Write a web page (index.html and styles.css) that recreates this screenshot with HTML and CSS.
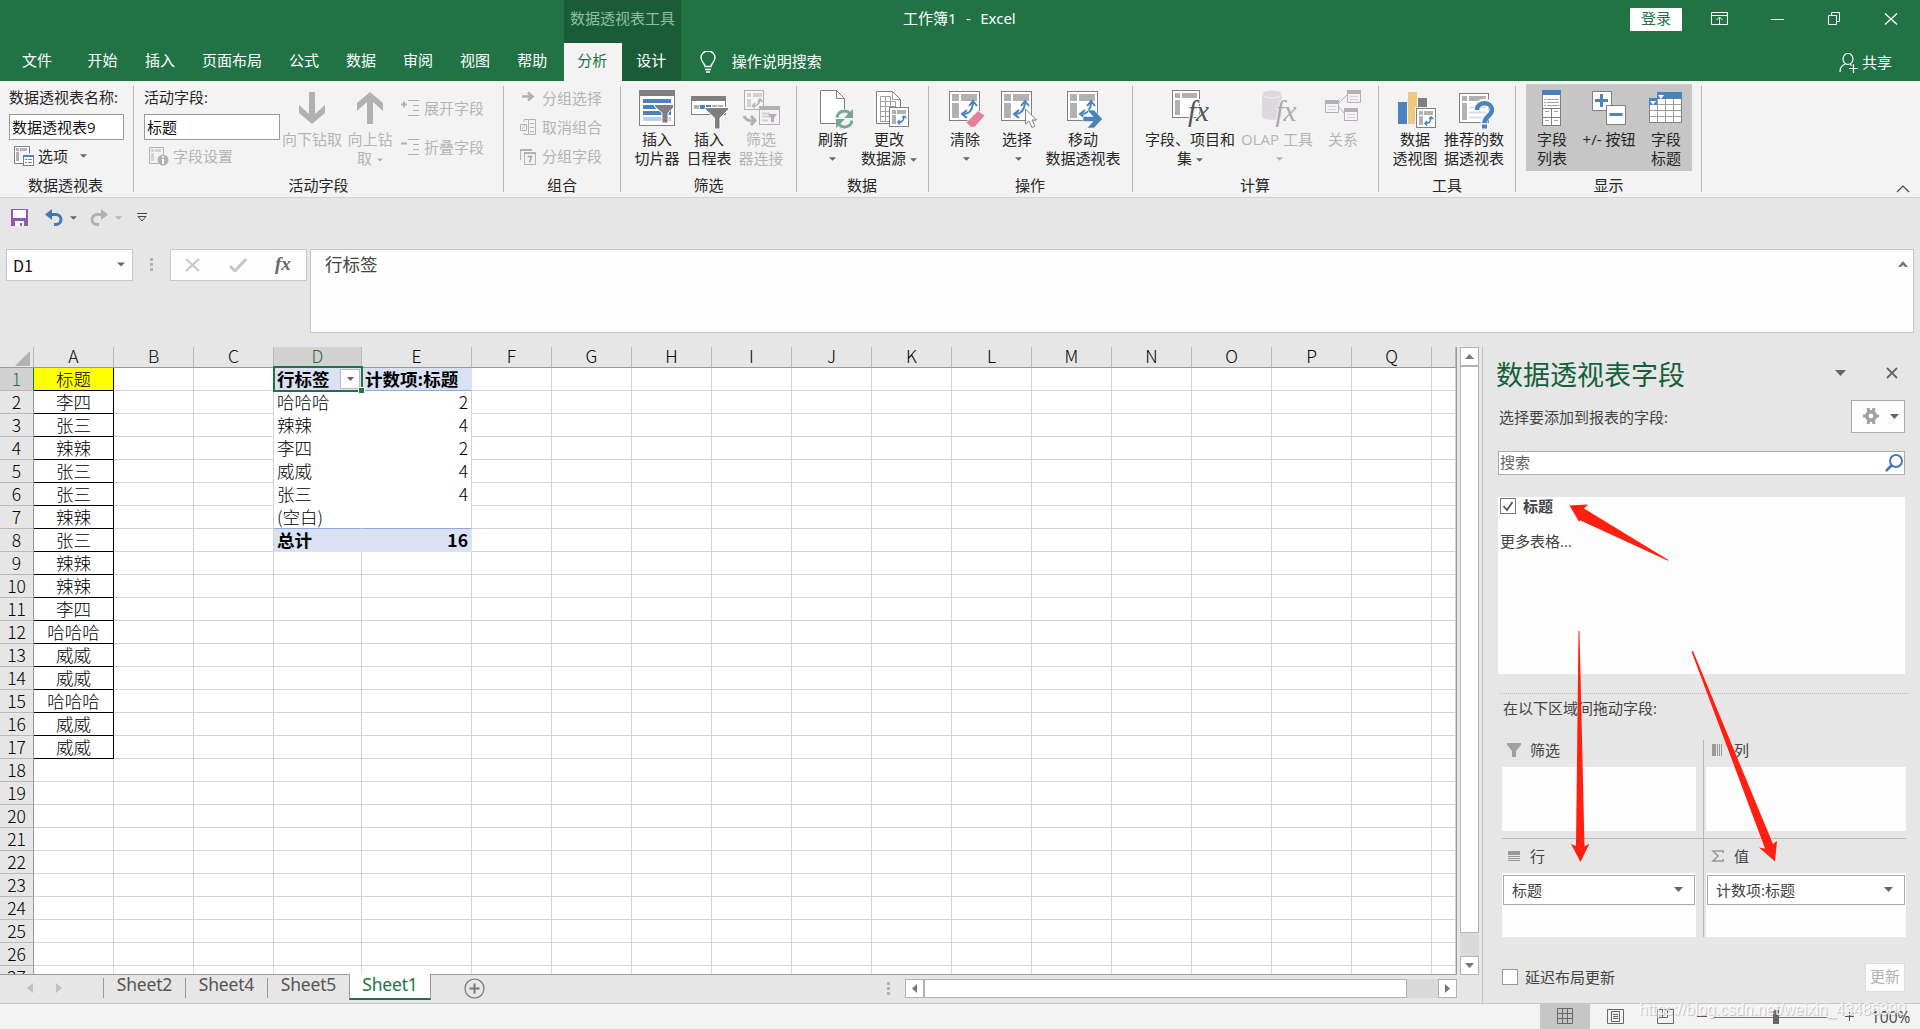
FILE: index.html
```html
<!DOCTYPE html>
<html lang="zh-CN">
<head>
<meta charset="utf-8">
<title>工作簿1 - Excel</title>
<link rel="stylesheet" href="styles.css">
</head>
<body>
<svg class="defs" width="0" height="0">
  <defs>
    <symbol id="pivot" viewBox="0 0 40 40">
      <rect x="4.5" y="2.5" width="30" height="29" fill="#fff" stroke="#7f7f7f"/>
      <path d="M7 5h7v7H7zM16 5h16v7H16zM7 14h7v15H7z" fill="#b1b1b1"/>
      <path d="M18 25q9 0 10-11M22 21l-5 4 5 4M24 17l4-5 4 5" fill="none" stroke="#4a82bd" stroke-width="2"/>
    </symbol>
    <symbol id="pivot-s" viewBox="0 0 20 20">
      <rect x=".5" y=".5" width="19" height="19" fill="#fff" stroke="#7f7f7f"/>
      <path d="M3 3h4v4H3zM8 3h9v4H8zM3 8h4v9H3z" fill="#b1b1b1"/>
      <path d="M9 15.500q6 0 6-6M11 13l-2 2.500 2 2M13 11l2-2 2.500 2" fill="none" stroke="#4a82bd" stroke-width="1.500"/>
    </symbol>
    <symbol id="down" viewBox="0 0 10 5"><path d="M0 0h10L5 5z" fill="currentColor"/></symbol>
  </defs>
</svg>

<header class="top">
  <div class="titlebar">
    <div class="context-title">数据透视表工具</div>
    <div class="doc-title">工作簿1&nbsp; -&nbsp; Excel</div>
    <div class="signin">登录</div>
    <svg class="win-icons" width="192" height="20" viewBox="0 0 192 20" fill="none" stroke="#fff">
      <path d="M4.500 3.500h16v12h-16zM4.500 6.500h16M12.500 15V8.500M9.500 11l3-3 3 3"/>
      <path d="M64 10.500h13M121.500 6.500h8v9h-8zM124.500 6V3.500h8v9H130"/>
      <path d="M178 4.500l12 11M190 4.500l-12 11" stroke-width="1.300"/>
    </svg>
  </div>
  <nav class="tabs">
    <span class="tab file">文件</span><span class="tab">开始</span><span class="tab">插入</span><span class="tab">页面布局</span><span class="tab">公式</span><span class="tab">数据</span><span class="tab">审阅</span><span class="tab">视图</span><span class="tab">帮助</span><span class="tab active">分析</span><span class="tab context">设计</span>
    <svg class="bulb" width="16" height="22" viewBox="0 0 16 22" fill="none" stroke="#fff" stroke-width="1.400"><path d="M5 15.500c0-3-4-4.500-4-9A7 6.500 0 0 1 15 6.500c0 4.500-4 6-4 9zM5 18.500h6M6 21h4"/></svg>
    <span class="tellme">操作说明搜索</span>
    <svg class="share-icon" width="20" height="20" viewBox="0 0 20 20" fill="none" stroke="#fff" stroke-width="1.200"><ellipse cx="9" cy="6" rx="5" ry="5.500"/><path d="M1 19c0-4 2-7 5.500-8M11 11.500l2 1M14.500 11v9M10 15.500h9"/></svg>
    <span>共享</span>
  </nav>
</header>

<section class="ribbon">
  <div class="group g-name">
    <div class="group-body fields">
      <span class="lbl">数据透视表名称:</span>
      <span class="input">数据透视表9</span>
      <span class="mini">
        <svg width="22" height="20" viewBox="0 0 22 20"><path d="M1.500.500h15v7M1.500.500v17h9" fill="#fff" stroke="#7f7f7f"/><path d="M3 2h3v3H3zM7 2h7v3H7zM3 6h3v9H3z" fill="#b1b1b1"/><rect x="10.500" y="9.500" width="10" height="10" fill="#fff" stroke="#7f7f7f"/><path d="M10 9h11v2H10z" fill="#4a82bd"/><path d="M12 13.500h2M15 13.500h4M12 16.500h2M15 16.500h4" stroke="#7f7f7f"/></svg>
        选项<svg class="caret opt" width="7" height="4"><use href="#down"/></svg>
      </span>
    </div>
    <div class="group-label">数据透视表</div>
  </div>
  <div class="group g-field">
    <div class="group-body row">
      <div class="fields">
        <span class="lbl">活动字段:</span>
        <span class="input wide">标题</span>
        <span class="mini off">
          <svg width="22" height="20" viewBox="0 0 22 20"><path d="M1.500 1.500h14v7M1.500 1.500v16h9" fill="none" stroke="#b1b1b1"/><path d="M3 3h3v3H3zM7 3h6v3H7zM3 7h3v8H3z" fill="#d5d0d5"/><circle cx="15" cy="14" r="5.500" fill="#b1b1b1"/><path d="M15 13v5M15 10v1.500" stroke="#fff" stroke-width="2"/></svg>
          字段设置
        </span>
      </div>
      <div class="btn off drill"><svg width="40" height="40"><path d="M17 3h6v22l10-9v8L20 35 7 24v-8l10 9z" fill="#b1b1b1"/></svg><span>向下钻取</span></div>
      <div class="btn off drill-up"><svg width="40" height="40"><path d="M17 35h6V13l10 9v-8L20 3 7 14v8l10-9z" fill="#b1b1b1"/></svg><span>向上钻<br>取<svg class="caret" width="6" height="4"><use href="#down"/></svg></span></div>
      <div class="stack two">
        <span class="mini off"><svg width="18" height="16" fill="none" stroke="#b1b1b1"><path d="M0 4.500h6M3 1.500v6" stroke-width="2"/><path d="M7 .500h11M12 5.500h6M12 10.500h6M7 15.500h11"/></svg>展开字段</span>
        <span class="mini off"><svg width="18" height="16" fill="none" stroke="#b1b1b1"><path d="M0 4.500h6" stroke-width="2"/><path d="M7 .500h11M12 5.500h6M12 10.500h6M7 15.500h11"/></svg>折叠字段</span>
      </div>
    </div>
    <div class="group-label">活动字段</div>
  </div>
  <div class="group g-group">
    <div class="group-body">
      <div class="stack three">
        <span class="mini off"><svg width="16" height="16"><path d="M2 6.500h10M8 2.500l4.500 4L8 10.500" fill="none" stroke="#b1b1b1" stroke-width="2.500"/></svg>分组选择</span>
        <span class="mini off"><svg width="16" height="16" fill="none" stroke="#b1b1b1"><path d="M.500 5.500h6v6h-6zM2 10l3-4M8.500.500h7v15h-7zM10 4.500h4M10 8.500h4M10 12.500h4M4 3V.500h4M4 13.500v2h4"/></svg>取消组合</span>
        <span class="mini off"><svg width="16" height="17"><path d="M.500 12V1.500h11M4.500 4.500h11v12h-11z" fill="none" stroke="#b1b1b1"/><path d="M0 1h12v2H0zM4 4h12v2H4z" fill="#b1b1b1"/><path d="M7.500 8.500h4l-2 6" fill="none" stroke="#a5a5a5" stroke-width="1.500"/></svg>分组字段</span>
      </div>
    </div>
    <div class="group-label">组合</div>
  </div>
  <div class="group g-filter">
    <div class="group-body row">
      <div class="btn"><svg width="40" height="40"><rect x="2.500" y="1.500" width="35" height="35" fill="#fff" stroke="#7f7f7f"/><path d="M2 1h36v6H2z" fill="#7f7f7f"/><path d="M6 10h28v4H6zM6 16h28v4H6zM6 22h28v4H6z" fill="#4a82bd"/><path d="M6 28h28v4H6z" fill="#bdd0e8"/><path d="M17 15.500h19.500v3L31 24v10h-6V24l-7-6z" fill="#7f7f7f" stroke="#fff"/></svg><span>插入<br>切片器</span></div>
      <div class="btn"><svg width="40" height="40"><rect x="2.500" y="7.500" width="34" height="18" fill="#fff" stroke="#7f7f7f"/><path d="M2 7h35v5H2z" fill="#7f7f7f"/><path d="M5 16h5v4H5zM23 16h5v4h-5zM29 16h5v4h-5z" fill="#b1b1b1"/><path d="M11 16h5v4h-5zM17 16h5v4h-5z" fill="#4a82bd"/><path d="M16 18.500h23.500v2L31 29v11h-5.500V29L16 20z" fill="#7f7f7f" stroke="#fff"/></svg><span>插入<br>日程表</span></div>
      <div class="btn off b-conn"><svg width="40" height="40"><rect x="3.500" y="1.500" width="19" height="19" fill="#f7f4f7" stroke="#b1b1b1"/><path d="M6 4h4v4H6zM12 4h9v4h-9zM6 10h4v8H6z" fill="#d5d0d5"/><path d="M12 17q6 0 7-6M14 14l-2.500 3 2.500 2M17 13l2-3 2.500 3" fill="none" stroke="#b1b1b1" stroke-width="1.500"/><rect x="18.500" y="17.500" width="20" height="18" fill="#f7f0f7" stroke="#b1b1b1"/><path d="M18 17h21v4H18z" fill="#b1b1b1"/><path d="M21 24.500h8M21 27.500h8M21 31.500h6" stroke="#d5d0d5" stroke-width="2"/><path d="M27 25h9l-3 4v4h-3v-4z" fill="#b1b1b1"/><path d="M3 27q2 5 9 5M10 27l4 4.500-4 4.500" fill="none" stroke="#b1b1b1" stroke-width="3"/></svg><span>筛选<br>器连接</span></div>
    </div>
    <div class="group-label">筛选</div>
  </div>
  <div class="group g-data">
    <div class="group-body row">
      <div class="btn"><svg width="40" height="40"><path d="M7.500 1.500h16l8 8v25h-24z" fill="#fff" stroke="#7f7f7f"/><path d="M23.500 1.500v8h8" fill="none" stroke="#7f7f7f"/><circle cx="31.500" cy="30" r="10" fill="#f3f3f3"/><path d="M24 28.500a7.500 7.500 0 0 1 13-4M39 31.500a7.500 7.500 0 0 1-13 4" fill="none" stroke="#76a797" stroke-width="3"/><path d="M40 20v9h-9zM23 39v-9h9z" fill="#76a797"/></svg><span>刷新<br><svg class="caret solo" width="7" height="4"><use href="#down"/></svg></span></div>
      <div class="btn b-src"><svg width="40" height="40"><path d="M7.500 2.500h16l8 8v24h-24z" fill="#fff" stroke="#7f7f7f"/><path d="M23.500 2.500v8h8M11.500 7.500h10v25h-10zM16.500 7.500v25M11.500 12.500h15v20h-15zM21.500 12v20M11.500 17.500h15M11.500 22.500h15M11.500 27.500h15" fill="none" stroke="#a0a0a0"/><use href="#pivot-s" x="20" y="18" width="20" height="20"/></svg><span>更改<br>数据源<svg class="caret near" width="7" height="4"><use href="#down"/></svg></span></div>
    </div>
    <div class="group-label">数据</div>
  </div>
  <div class="group g-act">
    <div class="group-body row">
      <div class="btn"><svg width="40" height="40"><use href="#pivot" width="40" height="40"/><path d="M33 21.500l7 5-10 11.500-4 .500-5-5z" fill="#e5829a" stroke="#f3f3f3"/></svg><span>清除<br><svg class="caret solo late" width="7" height="4"><use href="#down"/></svg></span></div>
      <div class="btn"><svg width="40" height="40"><use href="#pivot" width="40" height="40"/><path d="M28.500 20v15l3.500-3 3 6.500 3-1.500-3-6h4.500z" fill="#fff" stroke="#7f7f7f"/></svg><span>选择<br><svg class="caret solo late" width="7" height="4"><use href="#down"/></svg></span></div>
      <div class="btn b-move"><svg width="40" height="40"><use href="#pivot" width="40" height="40"/><path d="M20 27.500h10L24 21h7l8.500 9L31 39h-7l6-6.500H20z" fill="#4a82bd" stroke="#f3f3f3" stroke-width=".6"/></svg><span>移动<br>数据透视表</span></div>
    </div>
    <div class="group-label">操作</div>
  </div>
  <div class="group g-calc">
    <div class="group-body row">
      <div class="btn b-calc"><svg width="40" height="40"><rect x="2.500" y="1.500" width="27" height="27" fill="#fff" stroke="#7f7f7f"/><path d="M5 4h5v5H5zM12 4h15v5H12zM5 11h5v15H5z" fill="#b1b1b1"/><text x="18" y="32" class="fx fx-halo">fx</text></svg><span>字段、项目和<br>集<svg class="caret near" width="7" height="4"><use href="#down"/></svg></span></div>
      <div class="btn off b-olap"><svg width="40" height="40"><path d="M5 5v22c0 5 20 5 20 0V5z" fill="#ddd8dd"/><ellipse cx="15" cy="5" rx="10" ry="4" fill="#ddd8dd" stroke="#f3f3f3"/><text x="18.500" y="32" class="fx fx-off">fx</text></svg><span>OLAP 工具<br><svg class="caret solo late" width="7" height="4"><use href="#down"/></svg></span></div>
      <div class="btn off b-rel"><svg width="40" height="40" fill="#f7f0f7" stroke="#b1b1b1"><path d="M15 15l9-9M15 17l7 8" fill="none"/><path d="M2.500 11.500h13v12h-13zM24.500 1.500h13v12h-13zM21.500 19.500h13v12h-13z"/><path d="M2 13h14M24 3h14M21 21h14" stroke-width="4"/><path d="M5 17.500h8M5 20.500h8M27 7.500h8M27 10.500h8M24 25.500h8M24 28.500h8" stroke="#d5d0d5"/></svg><span>关系</span></div>
    </div>
    <div class="group-label">计算</div>
  </div>
  <div class="group g-tools">
    <div class="group-body row">
      <div class="btn"><svg width="42" height="40"><path d="M4 13h9v22H4z" fill="#4a82bd"/><path d="M14 3h9v32h-9z" fill="#eec97f"/><path d="M24 9h9v9h-9z" fill="#7f7f7f"/><path d="M21 18h21v21H21z" fill="#f3f3f3"/><use href="#pivot-s" x="22" y="19" width="20" height="20"/></svg><span>数据<br>透视图</span></div>
      <div class="btn b-rec"><svg width="40" height="40"><rect x="5.500" y="4.500" width="29" height="29" fill="#fff" stroke="#7f7f7f"/><path d="M8 7h5v5H8zM15 7h17v5H15zM8 14h5v17H8z" fill="#b1b1b1"/><path d="M15 18.500h17M15 23.500h17M15 28.500h17" stroke="#ddd" stroke-width="2"/><path d="M23 20c0-9 15-9 15 0 0 6-8 6-8 14" fill="none" stroke="#f3f3f3" stroke-width="7"/><path d="M23 21c0-9 15-9 15 0 0 6-7.500 6-7.500 13" fill="none" stroke="#4a82bd" stroke-width="4.500"/><path d="M28 35.500h5v4h-5z" fill="#4a82bd"/></svg><span>推荐的数<br>据透视表</span></div>
    </div>
    <div class="group-label">工具</div>
  </div>
  <div class="group g-show">
    <div class="group-body row">
      <div class="toggled row">
        <div class="btn"><svg width="40" height="40"><rect x="10.500" y="1.500" width="18" height="35" fill="#fff" stroke="#7f7f7f"/><path d="M10 1h19v5H10z" fill="#4a82bd"/><path d="M12 10.500h2M15 10.500h12M12 13.500h2M15 13.500h12M12 16.500h2M15 16.500h12M13 22.500h4M22 22.500h4M13 31.500h4M22 31.500h4" stroke="#a0a0a0"/><path d="M10 19.500h19M10 28.500h19M19.500 20v16" stroke="#7f7f7f"/></svg><span>字段<br>列表</span></div>
        <div class="btn"><svg width="40" height="40"><path d="M3.500 2.500h19v19h-19z" fill="#fff" stroke="#7f7f7f"/><path d="M6 11.500h13M12.500 5v13" stroke="#4a82bd" stroke-width="3"/><path d="M17.500 16.500h19v19h-19z" fill="#fff" stroke="#7f7f7f"/><path d="M20.500 25.500h13" stroke="#4a82bd" stroke-width="3"/></svg><span>+/- 按钮</span></div>
        <div class="btn"><svg width="40" height="40"><path d="M3.500 9.500h32v24h-32z" fill="#fff" stroke="#7f7f7f"/><path d="M3.500 15.500h32M3.500 21.500h32M3.500 27.500h32M11.500 9v24M19.500 9v24M27.500 9v24" stroke="#a0a0a0" fill="none"/><path d="M11 3h25v7H11zM3 9h8v7H3z" fill="#4a82bd"/><path d="M12 6h6l-3 4zM4 12h6l-3 4z" fill="#fff"/></svg><span>字段<br>标题</span></div>
      </div>
    </div>
    <div class="group-label">显示</div>
  </div>
  <svg class="collapse" width="14" height="8" fill="none" stroke="#444" stroke-width="1.200"><path d="M1 7l6-6 6 6"/></svg>
</section>

<div class="qat">
  <svg class="save" width="17" height="17"><path d="M0 0h17v17H0z" fill="#8e5bb0"/><path d="M2 1h13v8H2zM4 12h9v5h-2v-3H9v3H4z" fill="#fdfdfd"/></svg>
  <svg class="undo" width="19" height="17"><path d="M3 5.500h8a5 5 0 0 1 0 10H9" fill="none" stroke="#4178b5" stroke-width="3"/><path d="M7 0v11L0 5.500z" fill="#4178b5"/></svg>
  <svg class="caret c1" width="7" height="4"><use href="#down"/></svg>
  <svg class="redo" width="19" height="17"><path d="M16 5.500H8a5 5 0 0 0 0 10h2" fill="none" stroke="#b1b1b1" stroke-width="3"/><path d="M12 0v11l7-5.500z" fill="#b1b1b1"/></svg>
  <svg class="caret c2" width="7" height="4"><use href="#down"/></svg>
  <svg class="custom" width="10" height="9" fill="none" stroke="#444"><path d="M0 .500h10M1 3.500h8L5 8z"/></svg>
</div>

<div class="formula-row">
  <div class="name-box">D1<svg class="caret" width="8" height="5"><use href="#down"/></svg></div>
  <div class="grip"><i></i><i></i><i></i></div>
  <div class="fx-box">
    <svg width="16" height="14"><path d="M1 1l13 12M14 1L1 13" stroke="#c6c6c6" stroke-width="2"/></svg>
    <svg width="18" height="14"><path d="M1 8l5 5L17 1" fill="none" stroke="#c6c6c6" stroke-width="3"/></svg>
    <span class="fx-label">fx</span>
  </div>
  <div class="formula">行标签<svg class="f-up" width="10" height="6"><path d="M0 6l5-6 5 6H7L5 4 3 6z" fill="#777"/></svg></div>
</div>

<main class="work">
  <section class="book">
    <div class="sheet-row">
      <div class="sheet"><table class="grid" id="grid"></table></div>
      <div class="vscroll">
        <div class="sb"><svg width="9" height="5"><path d="M0 5h9L4.500 0z" fill="#777"/></svg></div>
        <div class="vthumb"></div>
        <div class="vtrack"></div>
        <div class="sb"><svg width="9" height="5"><path d="M0 0h9L4.500 5z" fill="#777"/></svg></div>
      </div>
    </div>
    <div class="sheetbar">
      <svg class="nav" width="36" height="10"><path d="M6 0v10L0 5zM29 0v10l6-5z" fill="#c0c0c0"/></svg>
      <span class="stab">Sheet2</span><span class="stab">Sheet4</span><span class="stab">Sheet5</span><span class="stab current">Sheet1</span>
      <svg class="add" width="21" height="21" fill="none" stroke="#777"><circle cx="10.500" cy="10.500" r="9.500" stroke-width="1.200"/><path d="M5.500 10.500h10M10.500 5.500v10" stroke-width="2"/></svg>
      <div class="grip h"><i></i><i></i><i></i></div>
      <div class="hscroll">
        <div class="sb"><svg width="5" height="9"><path d="M5 0v9L0 4.500z" fill="#777"/></svg></div>
        <div class="hthumb"></div>
        <div class="htrack"></div>
        <div class="sb"><svg width="5" height="9"><path d="M0 0v9l5-4.500z" fill="#777"/></svg></div>
      </div>
    </div>
  </section>

  <aside class="pane">
    <div class="pane-head">
      <h2>数据透视表字段</h2>
      <svg width="11" height="6"><path d="M0 0h11L5.500 6z" fill="#666"/></svg>
      <svg class="close" width="12" height="12"><path d="M1 1l10 10M11 1L1 11" stroke="#666" stroke-width="1.800"/></svg>
    </div>
    <div class="pane-sub">
      <span>选择要添加到报表的字段:</span>
      <div class="gear"><svg width="16" height="16"><circle cx="8" cy="8" r="4.200" fill="none" stroke="#a0a0a0" stroke-width="3.600"/><path d="M5 0l1 4M11 0l-1 4M0 8h3M13 8h3M5 16l1-4M11 16l-1-4" stroke="#a0a0a0" stroke-width="3"/></svg><svg width="9" height="5"><path d="M0 0h9L4.500 5z" fill="#666"/></svg></div>
    </div>
    <div class="search">搜索<svg width="18" height="18" fill="none" stroke="#4178b5"><circle cx="11" cy="7" r="6" stroke-width="2"/><path d="M6.500 11.500L1 17" stroke-width="2.500"/></svg></div>
    <div class="field-list">
      <div class="field"><span class="check"><svg width="12" height="12"><path d="M1.500 6l3.500 4L10.500 2" fill="none" stroke="#555" stroke-width="1.800"/></svg></span><b>标题</b></div>
      <div class="more">更多表格...</div>
    </div>
    <div class="drag-hint">在以下区域间拖动字段:</div>
    <div class="areas">
      <div class="area">
        <div class="area-head"><svg width="14" height="14"><path d="M0 0h14v2L9 8v6H5V8L0 2z" fill="#a0a0a0"/></svg>筛选</div>
        <div class="drop"></div>
      </div>
      <div class="area right">
        <div class="area-head"><svg width="14" height="14"><path d="M1 1h4v12H1zM6 1h1v12H6zM8 1h1v12H8zM10 1h1v12h-1z" fill="#999"/></svg>列</div>
        <div class="drop"></div>
      </div>
      <div class="area bottom">
        <div class="area-head"><svg width="14" height="14"><path d="M1 2h12v4H1zM1 7h12v1H1zM1 9h12v1H1zM1 11h12v1H1z" fill="#999"/></svg>行</div>
        <div class="drop"><div class="chip">标题<svg width="9" height="5"><path d="M0 0h9L4.500 5z" fill="#666"/></svg></div></div>
      </div>
      <div class="area right bottom">
        <div class="area-head"><svg width="14" height="14"><path d="M12 4V2H2l5 5-5 5h10v-2" fill="none" stroke="#999" stroke-width="1.600"/></svg>值</div>
        <div class="drop"><div class="chip">计数项:标题<svg width="9" height="5"><path d="M0 0h9L4.500 5z" fill="#666"/></svg></div></div>
      </div>
    </div>
    <div class="defer"><span class="check"></span>延迟布局更新<span class="update">更新</span></div>
  </aside>
</main>

<footer class="status">
  <div class="view on"><svg width="17" height="17" fill="none" stroke="#666"><path d="M.500.500h15v15H.500zM5.500 0v16M10.500 0v16M0 5.500h16M0 10.500h16"/></svg></div>
  <div class="view"><svg width="17" height="17" fill="none" stroke="#666"><path d="M.500 1.500h16v14H.500zM4.500 3.500h8v10h-8zM6 6.500h5M6 8.500h5M6 10.500h5"/></svg></div>
  <div class="view"><svg width="17" height="17" fill="none" stroke="#666"><path d="M.500 1.500h16v14H.500zM5.500 2v7.500h-5M10.500 2v7.500h-5"/></svg></div>
  <svg class="zoom" width="160" height="17" stroke="#777"><path d="M0 8.500h10M148 8.500h9M152.500 4v9" stroke="#555"/><path d="M16 9.500h116"/><path d="M76 2h6v14h-6z" fill="#666" stroke="none"/></svg>
  <span class="pct">100%</span>
  <span class="watermark">https://blog.csdn.net/weixin_43486390</span>
</footer>

<svg class="arrows" width="1920" height="1029" fill="#ff2012">
  <path d="M1569.500 505.500l18.500-1-4 4 84.500 51.500-.500.700-88-40.500-1 1.500z"/>
  <path d="M1578.500 631h1l5 215.500 5-3-9 18.500-9.500-18 5 2z"/>
  <path d="M1691.500 651.500l1.500-.500L1773 844l4-3-2 20.500-16-14 6 1z"/>
</svg>
<script src="grid.js"></script>
</body>
</html>
```
FILE: styles.css
```css
* { box-sizing: border-box; }
body {
  margin: 0; width: 1920px; height: 1029px; overflow: hidden; position: relative;
  display: flex; flex-direction: column; background: #e6e6e6; color: #262626;
  font: 15px/20px "Open Sans", "Noto Sans CJK SC", sans-serif;
}
svg { display: block; flex: none; }
.defs { position: absolute; }
.caret { display: inline-block; color: #666; }

/* title bar and ribbon tabs */
.top { background: #217346; color: #fff; height: 81px; flex: none; }
.titlebar { height: 43px; display: flex; align-items: flex-start; }
.context-title { width: 117px; height: 43px; margin-left: 564px; background: #1b5c38; color: #8fbf9f; text-align: center; line-height: 37px; }
.doc-title { margin-left: 222px; width: 130px; line-height: 37px; white-space: nowrap; font-size: 15px; word-spacing: .8px; font-family: "Noto Sans", "Noto Sans CJK SC", sans-serif; }
.signin { margin: 8px 0 0 597px; width: 52px; height: 23px; background: #fff; color: #217346; text-align: center; line-height: 21px; border-radius: 1px; }
.win-icons { margin: 9px 0 0 25px; }
.tabs { height: 38px; display: flex; align-items: center; }
.tab { padding: 0 13.500px; line-height: 34px; height: 38px; }
.tab.file { padding: 0 22px 0 22px; }
.tab:nth-child(3) { padding-left: 14px; }
.tab.active { width: 58px; margin-left: 3px; padding: 0 13.500px; background: #f3f3f3; color: #217346; }
.tab.context { width: 59px; padding: 0 14.500px; background: #1b5c38; }
.bulb { margin-left: 19px; }
.tellme { margin: -2px auto 0 16px; }
.share-icon { margin: 1px 3px 0 0; }
.share-icon + span { margin: -1px 28px 0 0; }

/* ribbon */
.ribbon { height: 117px; flex: none; display: flex; padding: 5px 0; background: #f3f3f3; border-bottom: 1px solid #d0d0d0; }
.group { height: 106px; border-right: 1px solid #b8b8b8; display: flex; flex-direction: column; }
.group-body { height: 89px; flex: none; }
.group-label { height: 20px; flex: none; line-height: 20px; text-align: center; white-space: nowrap; }
.row { display: flex; }
.g-name { width: 134px; }
.g-name .group-label { padding-right: 2px; }
.g-field { width: 370px; }
.g-group { width: 117px; }
.g-filter { width: 176px; }
.g-data { width: 132px; }
.g-act { width: 204px; }
.g-act .group-label, .g-calc .group-label, .g-data .group-label { padding-right: 1px; }
.g-calc { width: 246px; }
.g-tools { width: 137px; }
.g-show { width: 186px; }
.fields { display: flex; flex-direction: column; padding-left: 9px; flex: none; }
.g-field .fields { padding-left: 10px; }
.lbl { line-height: 22px; height: 28px; flex: none; white-space: nowrap; }
.input { width: 115px; height: 26px; flex: none; border: 1px solid #999; background: #fff; line-height: 24px; padding-left: 2px; color: #111; }
.input.wide { width: 136px; }
.mini { display: flex; align-items: center; gap: 5px; line-height: 20px; white-space: nowrap; }
.fields .mini { margin: 5px 0 0 4px; height: 22px; flex: none; gap: 3px; }
.opt { margin-left: 9px; }
.off, .off .caret { color: #b4b4b4; }
.btn { width: 50px; flex: none; padding-top: 3px; display: flex; flex-direction: column; align-items: center; text-align: center; line-height: 19px; white-space: nowrap; }
.btn > span { margin-top: 1px; }
.caret { vertical-align: middle; }
.near { margin-left: 4px; }
.solo { margin: 8px auto 0; display: block; }
.late { position: relative; left: 2px; }
.drill { margin-left: 7px; }
.drill-up { margin-left: 8px; }
.drill-up .caret { margin-left: 5px; }
.stack { display: flex; flex-direction: column; }
.stack.two { margin: 12px 0 0 6px; gap: 19px; }
.stack.three { padding: 2px 0 0 16px; gap: 9px; }
.stack.three .mini { gap: 6px; }
.g-filter .row { padding-left: 11px; gap: 2px; }
.b-conn { margin-left: 0; }
.g-data .row { padding-left: 11px; gap: 6px; }
.g-act .row { padding-left: 11px; gap: 2px; }
.b-move { margin-left: 14px; }
.g-calc .row { padding-left: 32px; }
.b-olap { margin-left: 37px; }
.b-rel { margin-left: 16px; }
.g-tools .row { padding-left: 11px; gap: 9px; }
.g-show .toggled { margin: -2px 0 0 10px; width: 166px; height: 87px; flex: none; background: #c6c6c6; padding: 2px 0 0 1px; gap: 7px; }
.collapse { margin: 99px 0 0 194px; }
.fx { font: italic 29px "Liberation Serif", serif; fill: #555; }
.fx-halo { paint-order: stroke; stroke: #f3f3f3; stroke-width: 2px; }
.fx-off { fill: #aaa; paint-order: stroke; stroke: #f3f3f3; stroke-width: 2px; }

/* quick access toolbar */
.qat { flex: none; display: flex; padding: 0 0 1px 11px; align-items: center; height: 40px; }
.undo { margin-left: 17px; }
.c1 { margin-left: 6px; }
.redo { margin-left: 12px; }
.c2 { margin-left: 7px; color: #b4b4b4; }
.custom { margin-left: 15px; }

/* formula bar */
.formula-row { height: 109px; flex: none; padding: 11px 6px 0; display: flex; align-items: flex-start; }
.name-box { width: 127px; height: 32px; border: 1px solid #c6c6c6; background: #fdfdfd; display: flex; align-items: center; justify-content: space-between; padding: 0 7px 1px 6px; color: #111; font-family: "Noto Sans CJK SC", sans-serif; font-size: 16px; }
.grip { display: flex; flex-direction: column; gap: 2px; margin: 9px 0 0 17px; }
.grip i { width: 3px; height: 3px; background: #b1b1b1; }
.fx-box { margin-left: 17px; width: 137px; height: 32px; border: 1px solid #c6c6c6; background: #fdfdfd; display: flex; align-items: center; padding-left: 14px; gap: 28px; }
.fx-label { font: italic bold 19px "Liberation Serif", serif; color: #666; margin-bottom: 3px; }
.formula { margin-left: 3px; width: 1604px; height: 84px; border: 1px solid #c6c6c6; background: #fdfdfd; padding: 2px 5px 0 14px; font-size: 17.500px; line-height: 24px; color: #444; display: flex; justify-content: space-between; }
.f-up { margin-top: 9px; }

/* worksheet */
.work { height: 656px; flex: none; display: flex; }
.book { width: 1483px; border-right: 1px solid #c0c0c0; }
.sheet-row { display: flex; height: 628px; }
.sheet { width: 1457px; height: 628px; overflow: hidden; border-right: 1px solid #999; border-bottom: 1px solid #999; background: #e6e6e6; }
.grid { border-collapse: separate; border-spacing: 0; table-layout: fixed; width: 1456px; background: #fff; font: 300 17.500px/20px "Noto Sans CJK SC", sans-serif; color: #000; }
.grid th { font-weight: 300; }
.grid thead th { height: 21px; padding: 0; line-height: 18px; vertical-align: top; background: #e6e6e6; border-right: 1px solid #b8b8b8; border-bottom: 1px solid #999; }
.grid thead th.sel, .grid tbody th.sel { background: #d2d2d2; color: #217346; }
.grid tbody th { height: 23px; padding: 0; background: #e6e6e6; border-right: 1px solid #999; border-bottom: 1px solid #b8b8b8; }
.grid tbody th.sel { border-right: 1px solid #217346; }
.grid td { height: 23px; padding: 0; border-right: 1px solid #d4d4d4; border-bottom: 1px solid #d4d4d4; white-space: nowrap; }
.corner svg { margin: 4px 0 0 15px; }
.grid td.src { text-align: center; border-color: #000; }
.grid td.title { background: #ff0; }
.grid td.pl { padding-left: 3px; border-color: #fff; }
.grid td.pr { text-align: right; padding-right: 3px; border-bottom-color: #fff; }
.grid td.ph { background: #d9e1f2; font-weight: 600; border-bottom-color: #8ea9db; border-right-color: #d9e1f2; padding-left: 3px; text-align: left; }
.grid td.pt { background: #d9e1f2; font-weight: 600; border-color: #d9e1f2; }
.grid td.edge { border-bottom-color: #8ea9db; }
.grid td.active { position: relative; }
.frame { position: absolute; left: -1px; top: -2px; width: 90px; height: 26px; border: 2px solid #217346; z-index: 1; }
.frame::after { content: ""; position: absolute; right: -3px; bottom: -3px; width: 5px; height: 5px; background: #217346; box-shadow: 0 0 0 1px #fff; }
.drop-btn { position: absolute; right: 1px; top: 1px; width: 20px; height: 20px; background: #fdfdfd; border: 1px solid #b5bccb; display: flex; align-items: center; justify-content: center; }
.vscroll { margin-left: 3px; width: 19px; height: 628px; display: flex; flex-direction: column; }
.sb { width: 19px; height: 19px; flex: none; background: #fff; border: 1px solid #b1b1b1; display: flex; align-items: center; justify-content: center; }
.vthumb { height: 567px; flex: none; border: 1px solid #b1b1b1; background: #fff; }
.vtrack { flex: 1; background: #dadada; }
.sheetbar { height: 28px; display: flex; align-items: flex-start; }
.nav { margin: 8px 40px 0 27px; }
.stab { width: 82px; height: 20px; margin-top: 3px; border-left: 1px solid #999; text-align: center; font: 17.500px/13px "Noto Sans", "Noto Sans CJK SC", sans-serif; letter-spacing: -.2px; color: #555; }
.stab.current { margin-top: -1px; height: 26px; line-height: 21px; background: #fff; color: #217346; border: 1px solid #999; border-top: 0; border-bottom: 2px solid #217346; }
.add { margin: 3px 0 0 33px; }
.grip.h { margin: 7px 0 0 402px; }
.hscroll { margin: 4px 0 0 15px; display: flex; width: 552px; height: 19px; }
.hthumb { width: 483px; background: #fff; border: 1px solid #b1b1b1; }
.htrack { flex: 1; background: #dadada; }

/* field pane */
.pane { width: 437px; padding: 0 15px 0 15px; color: #444; display: flex; flex-direction: column; }
.pane-head { display: flex; align-items: center; height: 51px; padding-right: 7px; }
.pane h2 { margin: 4px auto 0 -2px; font-size: 27px; line-height: 36px; font-weight: 400; color: #14603a; }
.pane-head > .close { margin: 0 0 0 40px; }
.pane-sub { display: flex; justify-content: space-between; align-items: center; height: 38px; }
.pane-sub > span { padding-left: 1px; }
.gear { width: 54px; height: 33px; margin-top: -2px; border: 1px solid #ababab; background: #fdfdfd; display: flex; align-items: center; justify-content: center; gap: 11px; padding-left: 5px; }
.search { margin-top: 15px; height: 24px; border: 1px solid #ababab; background: #fff; display: flex; justify-content: space-between; line-height: 21px; padding: 0 1px 0 1px; color: #666; }
.search svg { margin-top: 2px; }
.field-list { margin-top: 22px; height: 177px; background: #fdfdfd; padding: 1px 2px; }
.field { display: flex; align-items: center; gap: 7px; height: 16px; }
.field b { font-weight: 600; }
.check { width: 16px; height: 16px; border: 1px solid #777; background: #fff; display: flex; align-items: center; justify-content: center; flex: none; }
.more { margin-top: 17px; }
.drag-hint { margin: 19px -4px 0 2px; padding: 4px 0 0 3px; border-top: 1px dotted #b8b8b8; height: 47px; }
.areas { display: grid; grid-template-columns: 202px 202px; grid-template-rows: 98px 99px; margin-left: 4px; }
.area { border-right: 1px solid #b8b8b8; padding-right: 7px; }
.area.right { border-right: 0; padding: 0 0 0 2px; }
.area.bottom { border-top: 1px solid #b8b8b8; }
.area-head { height: 27px; display: flex; align-items: center; gap: 9px; padding: 0 0 7px 5px; line-height: 22px; }
.area.bottom .area-head { height: 34px; padding-top: 2px; padding-bottom: 2px; }
.drop { height: 64px; background: #fdfdfd; padding: 2px 1px; }
.chip { height: 30px; border: 1px solid #ababab; background: #fff; display: flex; justify-content: space-between; align-items: center; padding: 0 11px 1px 8px; }
.defer { display: flex; align-items: center; gap: 7px; margin: 26px 0 0 4px; height: 29px; line-height: 18px; padding-bottom: 1px; }
.defer .check { border-color: #999; }
.update { margin-left: auto; width: 40px; height: 29px; border: 1px solid #ddd; background: #fdfdfd; color: #b1b1b1; line-height: 25px; text-align: center; }

/* status bar */
.status { height: 26px; flex: none; display: flex; background: #f3f3f3; border-top: 1px solid #c6c6c6; padding-left: 1540px; position: relative; }
.view { width: 50px; height: 25px; display: flex; align-items: center; justify-content: center; }
.view.on { background: #c6c6c6; }
.zoom { margin: 4px 0 0 7px; }
.pct { margin: 3px 0 0 14px; color: #444; font-size: 15.500px; }
.watermark { position: absolute; left: 1639px; top: -5px; font: 15.700px/22px "Liberation Sans", sans-serif; color: rgba(255,255,255,.85); text-shadow: 1px 1px 1px rgba(120,120,120,.45); white-space: nowrap; }
.arrows { position: absolute; left: 0; top: 0; pointer-events: none; }
```
FILE: grid.js
```javascript
const widths = [34, 80, 80, 80, 88, 110, 80, 80, 80, 80, 80, 80, 80, 80, 80, 80, 80, 80, 24];
const names = ['标题', '李四', '张三', '辣辣', '张三', '张三', '辣辣', '张三', '辣辣', '辣辣', '李四', '哈哈哈', '威威', '威威', '哈哈哈', '威威', '威威'];
const pivot = [['行标签', '计数项:标题'], ['哈哈哈', '2'], ['辣辣', '4'], ['李四', '2'], ['威威', '4'], ['张三', '4'], ['(空白)', ''], ['总计', '16']];

function pivotClass(row, col) {
  if (row === 0) return col ? 'ph' : 'ph active';
  return (col ? 'pr' : 'pl') + (row === 7 ? ' pt' : '') + (row === 6 ? ' edge' : '');
}

let html = '<colgroup>' + widths.map(w => `<col style="width:${w}px">`).join('') + '</colgroup><thead><tr>';
html += '<th class="corner"><svg width="15" height="15"><path d="M15 0v15H0z" fill="#b1b1b1"/></svg></th>';
for (const c of 'ABCDEFGHIJKLMNOPQ') html += `<th class="${c === 'D' ? 'sel' : ''}">${c}</th>`;
html += '<th></th></tr></thead><tbody>';
for (let r = 0; r < 27; r++) {
  html += `<tr><th class="${r ? '' : 'sel'}">${r + 1}</th>`;
  for (let c = 0; c < 18; c++) {
    if (c === 0 && names[r]) html += `<td class="src${r ? '' : ' title'}">${names[r]}</td>`;
    else if ((c === 3 || c === 4) && pivot[r]) {
      const extra = r === 0 && c === 3 ? '<span class="drop-btn"><svg width="7" height="4"><path d="M0 0h7L3.500 4z" fill="#666"/></svg></span><span class="frame"></span>' : '';
      html += `<td class="${pivotClass(r, c - 3)}">${pivot[r][c - 3]}${extra}</td>`;
    } else html += '<td></td>';
  }
  html += '</tr>';
}
document.getElementById('grid').innerHTML = html + '</tbody>';
```
